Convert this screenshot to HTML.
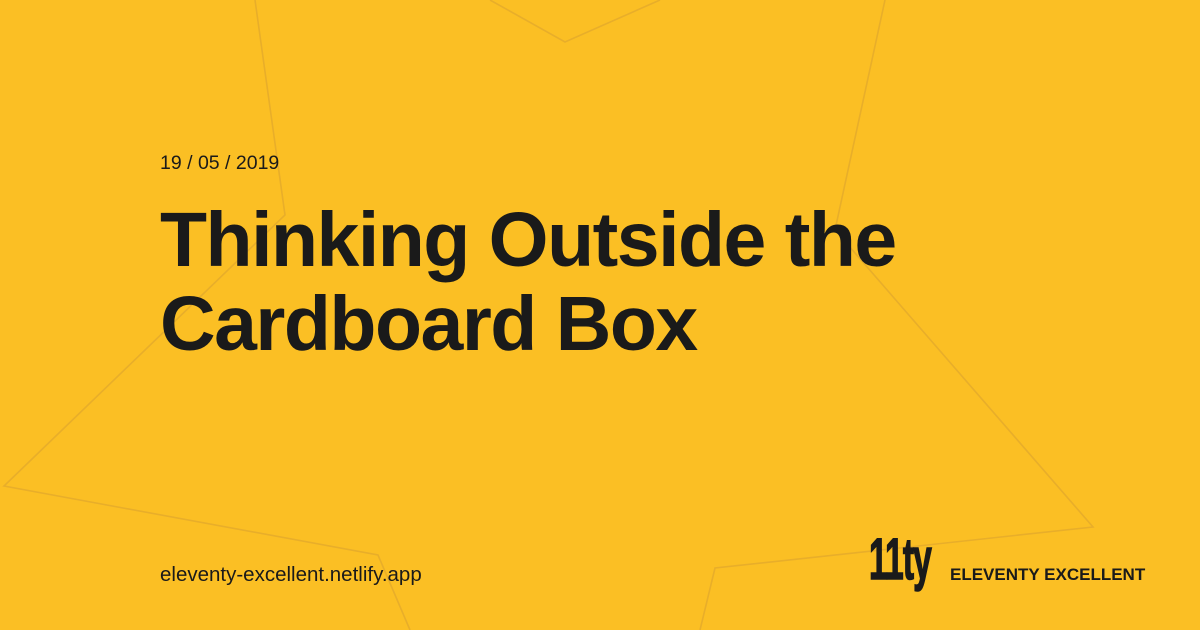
<!DOCTYPE html>
<html><head><meta charset="utf-8"><style>
html,body{margin:0;padding:0}
body{width:1200px;height:630px;background:#fbbf24;position:relative;overflow:hidden;font-family:"Liberation Sans",Arial,sans-serif;color:#1a1a1a}
svg.bg{position:absolute;left:0;top:0}
.date{position:absolute;left:160px;top:152px;font-size:19.5px}
h1{position:absolute;left:160px;top:198px;margin:0;font-size:77px;line-height:84px;font-weight:700;letter-spacing:-1.5px}
.url{position:absolute;left:160px;top:563px;font-size:20.5px}
.logo{position:absolute;left:869px;top:530px;font-size:58px;font-weight:700;letter-spacing:-1.5px;transform:scaleX(0.58);transform-origin:left top;line-height:60px;-webkit-text-stroke:1.5px #1a1a1a}
.brand{position:absolute;left:950px;top:565px;font-size:17px;font-weight:700}
</style></head><body>
<svg class="bg" width="1200" height="630"><g fill="none" stroke="#e8ae2a" stroke-width="1.6">
<polyline points="255,0 285,215 4,486 378,555 410,630"/>
<polyline points="490,0 565,42 660,0"/>
<polyline points="885,0 835,230 1093,527 715,568 700,630"/>
</g></svg>
<div class="date">19 / 05 / 2019</div>
<h1>Thinking Outside the<br>Cardboard Box</h1>
<div class="url">eleventy-excellent.netlify.app</div>
<div class="logo">11ty</div>
<div class="brand">ELEVENTY EXCELLENT</div>
</body></html>
